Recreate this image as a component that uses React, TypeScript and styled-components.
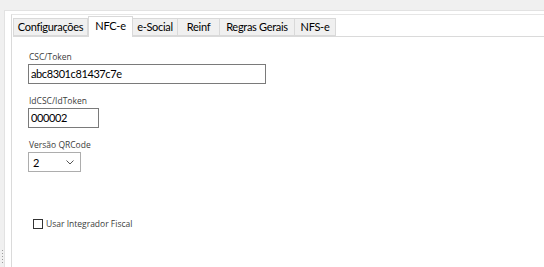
import React from "react";
import styled, { createGlobalStyle } from "styled-components";

const GlobalStyle = createGlobalStyle`
  html, body {
    margin: 0;
    padding: 0;
    background: #f0f0f0;
    font-family: "Open Sans", "Noto Sans", sans-serif;
  }
`;

const Window = styled.div`
  position: relative;
  width: 544px;
  height: 267px;
  background: #f0f0f0;
  padding-top: 10px;
  padding-left: 4px;
  box-sizing: border-box;
  overflow: hidden;
`;

const Frame = styled.div`
  height: 100%;
  background: #ffffff;
  border-top: 1px solid #e2e2e2;
  border-left: 1px solid #e2e2e2;
  padding: 3px 0 0 6px;
  box-sizing: border-box;
  display: flex;
  flex-direction: column;
`;

const TabControl = styled.div`
  flex: 1;
  border-top: 1px solid #e6e6e6;
  border-left: 1px solid #dadada;
  padding-left: 1px;
  display: flex;
  flex-direction: column;
`;

const TabStrip = styled.div`
  display: flex;
  align-items: flex-end;
  height: 21px;
  border-bottom: 1px solid #dadada;
`;

const Tab = styled.div<{ $active?: boolean; $width: number }>`
  width: ${(p) => p.$width}px;
  height: ${(p) => (p.$active ? "21px" : "18px")};
  margin-bottom: ${(p) => (p.$active ? "-1px" : "0")};
  background: ${(p) => (p.$active ? "#ffffff" : "#f0f0f0")};
  border: 1px solid #d9d9d9;
  border-bottom: ${(p) => (p.$active ? "none" : "1px solid #d9d9d9")};
  border-left: ${(p) => (p.$active ? "1px solid #d9d9d9" : "none")};
  box-sizing: border-box;
  font-family: "Lato", "Open Sans", sans-serif;
  font-size: 11px;
  letter-spacing: -0.3px;
  line-height: ${(p) => (p.$active ? "18px" : "16px")};
  text-align: center;
  color: #000;
  white-space: nowrap;
  &:first-child {
    border-left: 1px solid #d9d9d9;
  }
`;

const Content = styled.div`
  flex: 1;
  padding: 13px 0 0 15px;
  display: flex;
  flex-direction: column;
  align-items: flex-start;
`;

const Label = styled.div`
  font-size: 8.5px;
  color: #3c3c3c;
  height: 13px;
  line-height: 13px;
  margin-bottom: 1px;
  margin-left: 1px;
`;

const Field = styled.div<{ $width: number }>`
  width: ${(p) => p.$width}px;
  height: 20px;
  border: 1px solid #7a7a7a;
  box-sizing: border-box;
  font-family: "Lato", "Open Sans", sans-serif;
  font-size: 11px;
  letter-spacing: -0.4px;
  line-height: 18px;
  padding-left: 2px;
  color: #000;
  margin-bottom: 10px;
`;

const Select = styled.div`
  width: 53px;
  height: 20px;
  border: 1px solid #adadad;
  box-sizing: border-box;
  display: flex;
  align-items: center;
  justify-content: space-between;
  padding: 0 6px 0 4px;
  font-family: "Lato", "Open Sans", sans-serif;
  font-size: 11px;
  color: #000;
`;

const CheckRow = styled.label`
  display: flex;
  align-items: center;
  gap: 3px;
  margin-top: 46px;
  margin-left: 5px;
  font-size: 8.5px;
  color: #3c3c3c;
`;

const Box = styled.span`
  width: 10px;
  height: 10px;
  border: 1px solid #333;
  box-sizing: border-box;
  background: #fff;
`;

const Grip = styled.div`
  position: absolute;
  left: 1px;
  bottom: 2px;
  width: 3px;
  height: 16px;
  background-image: radial-gradient(circle, #9a9a9a 0.7px, transparent 0.8px);
  background-size: 3px 3px;
`;

const tabs = [
  { label: "Configurações", width: 75 },
  { label: "NFC-e", width: 45 },
  { label: "e-Social", width: 45 },
  { label: "Reinf", width: 42 },
  { label: "Regras Gerais", width: 75 },
  { label: "NFS-e", width: 41 },
];

export default function App() {
  return (
    <>
      <GlobalStyle />
      <Window>
        <Frame>
          <TabControl>
            <TabStrip>
              {tabs.map((t) => (
                <Tab key={t.label} $width={t.width} $active={t.label === "NFC-e"}>
                  {t.label}
                </Tab>
              ))}
            </TabStrip>
            <Content>
              <Label>CSC/Token</Label>
              <Field $width={238}>abc8301c81437c7e</Field>
              <Label>IdCSC/IdToken</Label>
              <Field $width={71}>000002</Field>
              <Label>Versão QRCode</Label>
              <Select>
                <span>2</span>
                <svg width="8" height="5" viewBox="0 0 8 5">
                  <path d="M0.5 0.5 L4 4 L7.5 0.5" fill="none" stroke="#555" strokeWidth="1" />
                </svg>
              </Select>
              <CheckRow>
                <Box />
                Usar Integrador Fiscal
              </CheckRow>
            </Content>
          </TabControl>
        </Frame>
        <Grip />
      </Window>
    </>
  );
}
